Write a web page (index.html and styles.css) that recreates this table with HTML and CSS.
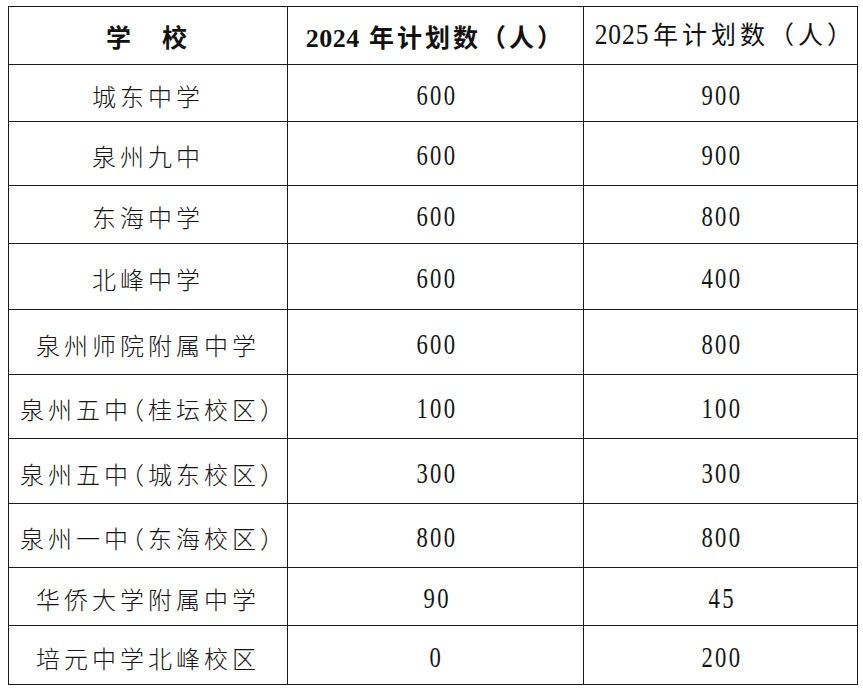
FILE: index.html
```html
<!DOCTYPE html>
<html lang="zh-CN">
<head>
<meta charset="utf-8">
<title>招生计划</title>
<link rel="stylesheet" href="styles.css">
</head>
<body>
<table class="plan">
  <colgroup>
    <col class="c-school">
    <col class="c-2024">
    <col class="c-2025">
  </colgroup>
  <thead>
    <tr class="r58">
      <th class="school-head">学　校</th>
      <th class="head-2024"><span class="yr-b">2024</span> 年计划数（人）</th>
      <th class="head-2025"><span class="yr">2025</span>年计划数（人）</th>
    </tr>
  </thead>
  <tbody>
    <tr class="r57"><td class="name">城东中学</td><td class="num"><span class="n">600</span></td><td class="num"><span class="n">900</span></td></tr>
    <tr class="r64"><td class="name">泉州九中</td><td class="num"><span class="n">600</span></td><td class="num"><span class="n">900</span></td></tr>
    <tr class="r58"><td class="name">东海中学</td><td class="num"><span class="n">600</span></td><td class="num"><span class="n">800</span></td></tr>
    <tr class="r66"><td class="name">北峰中学</td><td class="num"><span class="n">600</span></td><td class="num"><span class="n">400</span></td></tr>
    <tr class="r65"><td class="name">泉州师院附属中学</td><td class="num"><span class="n">600</span></td><td class="num"><span class="n">800</span></td></tr>
    <tr class="r64"><td class="name">泉州五中<span class="hp">（</span>桂坛校区<span class="hp">）</span></td><td class="num"><span class="n">100</span></td><td class="num"><span class="n">100</span></td></tr>
    <tr class="r65"><td class="name">泉州五中<span class="hp">（</span>城东校区<span class="hp">）</span></td><td class="num"><span class="n">300</span></td><td class="num"><span class="n">300</span></td></tr>
    <tr class="r64"><td class="name">泉州一中<span class="hp">（</span>东海校区<span class="hp">）</span></td><td class="num"><span class="n">800</span></td><td class="num"><span class="n">800</span></td></tr>
    <tr class="r58"><td class="name">华侨大学附属中学</td><td class="num"><span class="n">90</span></td><td class="num"><span class="n">45</span></td></tr>
    <tr class="r59"><td class="name">培元中学北峰校区</td><td class="num"><span class="n">0</span></td><td class="num"><span class="n">200</span></td></tr>
  </tbody>
</table>
</body>
</html>
```

FILE: styles.css
```css
html, body {
  background: #ffffff;
}
body {
  margin: 6px 0 0 8px;
  font-family: "Liberation Serif", "Noto Sans CJK SC", serif;
  color: #141414;
}
.plan {
  border-collapse: collapse;
  table-layout: fixed;
  width: 849px;
}
.c-school { width: 279px; }
.c-2024 { width: 296px; }
.c-2025 { width: 274px; }

.plan th,
.plan td {
  border: 1.4px solid #1a1a1a;
  padding: 4px 0 0 0;
  text-align: center;
  vertical-align: middle;
  white-space: nowrap;
}
.r57 { height: 57px; }
.r58 { height: 58px; }
.r59 { height: 59px; }
.r64 { height: 64px; }
.r65 { height: 65px; }
.r66 { height: 66px; }

.plan th {
  font-family: "Liberation Serif", "Noto Sans CJK SC", serif;
  font-size: 25px;
  font-weight: 700;
  letter-spacing: 3px;
  color: #111;
  padding-top: 0;
}
.school-head {
  letter-spacing: 6px;
  padding-left: 6px;
}
.head-2024 {
  font-weight: 700;
}
.plan th.head-2025 {
  font-weight: 400;
  letter-spacing: 4px;
  padding-bottom: 6px;
  padding-left: 10px;
}
.yr-b {
  font-size: 26px;
  font-weight: 700;
  letter-spacing: 0.5px;
}
.yr {
  display: inline-block;
  font-size: 29px;
  font-weight: 400;
  letter-spacing: 1px;
  transform: scaleX(0.88);
  margin: 0 0 0 -4px;
}
.name {
  font-family: "Noto Sans CJK SC", sans-serif;
  font-size: 24px;
  font-weight: 300;
  letter-spacing: 4px;
}
.hp {
  font-feature-settings: "halt";
}
.num {
  font-size: 29px;
}
.n {
  display: inline-block;
  letter-spacing: 3px;
  padding-left: 3px;
  transform: scaleX(0.78);
}
```
